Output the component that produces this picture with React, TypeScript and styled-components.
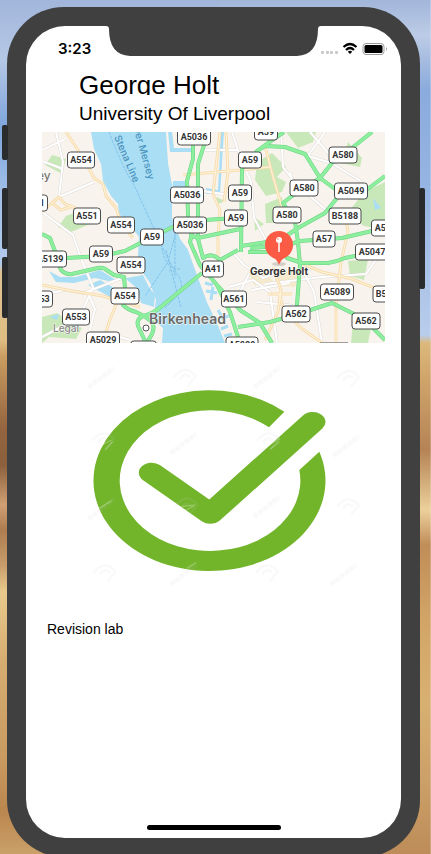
import React from "react";
import styled, { createGlobalStyle } from "styled-components";

const GlobalStyle = createGlobalStyle`
  *, *::before, *::after { box-sizing: border-box; }
  body { margin: 0; font-family: "Liberation Sans", Arial, sans-serif; color: #000; }
  h1, h2, p { margin: 0; font-weight: 400; }
  svg { display: block; }
`;

const Desktop = styled.div`
  display: flex;
  min-height: 100vh;
  overflow: hidden;
  background:
    linear-gradient(180deg, #a2b6db 0, #b5c8e6 60px, #8fb0df 105px, #7da6dc 130px, #a0bfe8 190px, #b2caed 264px,
      #dfc394 272px, #dfbd82 340px, #c99c60 357px, #93643f 430px, #8c603d 465px, #d0a074 505px, #ad7d50 530px,
      #c79c6a 565px, #e8ca8c 592px, #d6ad70 660px, #c89a60 760px, #bb864f 810px, #caa069 854px) 0 0 / 51% 100% no-repeat,
    linear-gradient(180deg, #a2b6db 0, #bccce6 35px, #a6bce0 60px, #8aabdd 90px, #98b6e3 200px, #b9cdec 335px,
      #dcb87c 343px, #cfa46a 380px, #b58356 450px, #ecd09c 510px, #c08d58 545px, #d2a567 620px, #d8b071 700px,
      #cca069 780px, #bd8c58 854px) 100% 0 / 51% 100% no-repeat;
`;

const Phone = styled.div`
  position: relative;
  flex: 1;
  display: flex;
  margin: 7px 11px -3px 7px;
  padding: 19px;
  border-radius: 57px;
  background: #404040;
`;

const SideButton = styled.span<{ $side: "left" | "right"; $top: number; $length: number }>`
  position: absolute;
  ${(p) => p.$side}: -5px;
  top: ${(p) => p.$top}px;
  width: 6px;
  height: ${(p) => p.$length}px;
  border-radius: 2px;
  background: #292b2d;
`;

const Screen = styled.main`
  flex: 1;
  min-width: 0;
  display: flex;
  flex-direction: column;
  overflow: hidden;
  border-radius: 39px;
  background: #fff;
`;

const StatusBar = styled.header`
  display: grid;
  grid-template-columns: 1fr 215px 1fr;
  height: 44px;
`;

const Clock = styled.time`
  padding: 14px 0 0 32px;
  font-family: Inter, sans-serif;
  font-size: 15px;
  line-height: 18px;
  font-weight: 600;
`;

const StatusIcons = styled.div`
  display: flex;
  justify-content: flex-end;
  padding: 16px 13px 0 0;
`;

const Heading = styled.div`
  padding: 0 16px 0 53px;
`;

const Name = styled.h1`
  height: 25px;
  overflow: hidden;
  font-size: 26px;
  line-height: 30px;
`;

const Place = styled.h2`
  padding: 6px 0;
  font-size: 19px;
  line-height: 25px;
`;

const Content = styled.section`
  padding: 0 16px;
`;

const Drawing = styled.svg`
  width: 100%;
  height: auto;
`;

const Caption = styled.p`
  padding: 26px 5px;
  font-size: 14px;
  line-height: 18px;
`;

const HomeIndicator = styled.div`
  width: 134px;
  height: 5px;
  margin: auto auto 8px;
  border-radius: 3px;
  background: #000;
`;

const RoadText = styled.text`
  font: bold 9px Roboto, sans-serif;
  fill: #343434;
  text-anchor: middle;
`;

const MapText = styled.text<{ $size: number; $color: string; $weight?: number }>`
  font-family: Inter, sans-serif;
  font-size: ${(p) => p.$size}px;
  font-weight: ${(p) => p.$weight ?? 500};
  fill: ${(p) => p.$color};
  stroke: ${(p) => (p.$color === "#4a93bd" ? "none" : "#fffdf8")};
  stroke-width: 1px;
  stroke-linejoin: round;
  paint-order: stroke;
`;

const mainRoads = [
  "M0 102L8 106 14 122Q17 126 24 126L60 124 83 119 108 106 133 94 163 88 194 86",
  "M12 118L14 126 19 138Q24 143 30 142L56 136Q62 135 66 139L72 143 82 145 83 156 81 173Q86 178 94 180L102 184Q112 181 120 174L160 141",
  "M102 184Q94 186 96 194L104 211M102 184L110 190Q115 198 104 211",
  "M151 0V27L145 49 146 84 150 101 148 110 158 133 175 153 188 180 198 211",
  "M163 10L156 32V107L161 126Q170 120 178 128L196 118",
  "M146 92L150 104 156 106 198 97",
  "M242 0L226 11 215 19 200 37 199 120M215 19L223 14 243 15 263 22 278 46 293 57 323 59 343 44",
  "M330 0L310 16 290 31 278 46 250 64 241 71 253 90 256 110 258 133 255 173V183",
  "M309 56L295 66 283 81 256 96 238 108 199 114",
  "M206 120H225L258 109 300 106 330 99 343 97",
  "M208 116L236 114 245 126 260 131H286Q294 130 303 126L343 118",
  "M175 153L198 178 218 191 230 211M196 195L228 190 253 183 290 171 310 181 324 189 338 203 343 208",
];

const lanes = [
  "M24 0L36 18 44 31 52 46 61 52 64 64 74 76 80 93 91 106",
  "M0 80L10 71 17 65 23 72 31 75 57 91M10 71L19 78 31 74",
  "M178 0L171 62 178 78 176 105 176 135M141 43L198 38 228 35",
  "M223 14L230 41 239 72 244 86M184 0L186 40 182 70",
  "M0 153L30 159 61 164 98 175M76 168L67 190 61 211",
  "M302 75L306 100 299 130 294 174 294 211",
  "M245 125L280 140 310 147 343 160M237 161L242 178 259 196 280 211",
  "M231 135L239 158 236 180 223 208M226 162H250",
];

const streets = [
  "M0 18L23 7M17 65L52 50M0 80L31 103 40 129 51 155 38 185M0 29L21 37M17 65L21 30 14 0",
  "M190 0L199 27 209 50 212 86 225 110M163 18H196M160 59L188 63",
  "M239 0L241 35 255 53 284 78M268 0L287 22M283 0L266 24 289 31 319 49",
  "M190 120L202 133 221 146 237 140M187 155L211 148 228 160 235 211M207 142L198 160",
  "M258 133L272 160 280 211M223 152L280 145 324 142 336 125M248 40L252 60M210 158L248 151M215 170L255 174",
  "M0 163L23 158 42 161 80 146M32 188L0 205M61 200L88 208M46 161L53 177 48 198",
];

const parks = [
  "M3 33L10 23 24 27 20 42Z",
  "M16 95L24 84 32 81 48 92 29 100Z",
  "M215 30L230 21 244 35 235 45 244 50 240 60 224 64 213 48Z",
  "M244 0H274L271 10 256 16Z",
  "M306 10L320 26 318 35 299 31Z",
  "M322 60L343 50V98L322 94 304 83Z",
  "M223 72L240 65 243 91 224 91Z",
  "M306 129L326 127 322 148 308 144Z",
  "M311 188L329 196 326 211H309Z",
  "M0 185L15 181 28 190 40 196 34 207 7 205 0 211Z",
  "M174 65L183 69 174 73ZM212 85L222 92 213 99Z",
];

const shields: [string, number, number, number][] = [
  ["A5036", 152, 5, 33], ["A59", 224, 0, 23], ["A59", 208, 28, 23], ["A554", 39, 28, 27],
  ["A580", 301, 23, 28], ["A5036", 145, 63, 33], ["A59", 198, 61, 23], ["A580", 262, 56, 28],
  ["A5049", 309, 59, 33], ["A551", -8, 71, 27], ["A551", 45, 84, 27], ["A554", 79, 93, 27],
  ["A5036", 148, 93, 33], ["A59", 194, 86, 23], ["A580", 245, 83, 28], ["B5188", 303, 84, 32],
  ["A5047", 346, 96, 33], ["A59", 110, 105, 23], ["A57", 282, 107, 22], ["A5139", 8, 127, 33],
  ["A59", 59, 122, 23], ["A554", 89, 133, 28], ["A41", 171, 137, 21], ["A5047", 330, 120, 33],
  ["A554", 83, 164, 28], ["A553", -3, 167, 27], ["A561", 192, 167, 25], ["A5089", 295, 160, 33],
  ["B5179", 347, 162, 32], ["A553", 34, 185, 27], ["A562", 254, 182, 28], ["A562", 324, 189, 28],
  ["A5029", 61, 208, 33], ["A5089", 200, 213, 32],
];

function StreetMap() {
  return (
    <Drawing viewBox="0 0 343 211" role="img" aria-label="Map of Liverpool">
      <rect width="343" height="211" fill="#f8f4ed" />
      {parks.map((d) => <path key={d} d={d} fill="#c9e8ba" />)}
      <path d="M207 142L224 139 232 151 212 153ZM235 138L258 140 253 155 232 154Z" fill="#f5eacb" />
      <g fill="#a9def5">
        <path d="M49 0L52 17 59 32 61 49 69 64 76 72 77 82 89 94 97 105 96 124 101 141 108 151 114 168 113 176 107 184 121 196 120 211H183L175 190 165 170 158 146 150 123 138 107 134 95 130 86V53L126 31 124 0Z" />
        <path d="M126 0H130L132 16H150V20H128ZM131 49H146L143 60H130ZM164 56L176 58 179 0H182L178 62H164Z" />
        <path d="M7 139L18 145H34L58 138 74 148 101 143 107 155 113 163 112 175 99 171 96 157 84 147 66 149 53 146 32 151 14 150ZM46 153L58 148 76 158 70 166Z" />
        <path d="M331 66L339 76 333 78ZM30 193L37 194 35 198ZM8 185L17 182 15 188Z" />
      </g>
      <path d="M150 111L163 142 174 163 187 170 199 211H184L165 170 156 146 146 118Z" fill="#f8f4ed" />
      <path d="M163 151L171 153M164 159L175 161M171 155L169 168M176 178L183 190M178 186L187 184M179 197L186 194M182 204L190 202" stroke="#a9def5" strokeWidth="3" fill="none" />
      <path d="M67 0Q82 39 92 53L125 125 133 139M133 93V146M134 100L126 130 103 164M119 108Q121 139 139 137M124 118L139 176M127 138Q142 142 139 160L123 176" stroke="#83c3ea" strokeWidth="1" strokeDasharray="3 1" fill="none" />
      <g fill="none" strokeLinejoin="round">
        {streets.map((d) => <path key={d} d={d} stroke="#dedad7" strokeWidth="3" />)}
        {streets.map((d) => <path key={d} d={d} stroke="#fff" strokeWidth="2" />)}
        {lanes.map((d) => <path key={d} d={d} stroke="#f7dcae" strokeWidth="3" />)}
        {lanes.map((d) => <path key={d} d={d} stroke="#fff6df" strokeWidth="1" />)}
        {mainRoads.map((d) => <path key={d} d={d} stroke="#6bd083" strokeWidth="4" />)}
        {mainRoads.map((d) => <path key={d} d={d} stroke="#8bef9e" strokeWidth="3" />)}
      </g>
      <MapText $size={10} $color="#4a93bd" transform="translate(72 5) rotate(67)">Stena Line</MapText>
      <MapText $size={10} $color="#4a93bd" transform="translate(89 -12) rotate(74)">River Mersey</MapText>
      <MapText $size={12} $color="#777" x="-5" y="48">ey</MapText>
      <MapText $size={10} $color="#888" x="11" y="200">Legal</MapText>
      {shields.map(([name, x, y, w], i) => (
        <g key={i}>
          <rect x={x - w / 2} y={y - 8} width={w} height="16" rx="3" fill="#fff" stroke="#4b4b4b" />
          <RoadText x={x} y={y + 3}>{name}</RoadText>
        </g>
      ))}
      <path d="M89 211Q89 209 92 209H111Q114 209 114 211" fill="#fff" stroke="#4b4b4b" />
      <path d="M278 211H306" stroke="#4b4b4b" />
      <circle cx="104" cy="196" r="3" fill="#fff" stroke="#555" />
      <MapText $size={14} $weight={600} $color="#696969" x="107" y="192">Birkenhead</MapText>
      <ellipse cx="237" cy="132" rx="7" ry="2" fill="#000" opacity=".15" />
      <circle cx="237" cy="113" r="14" fill="#fb5b45" />
      <path d="M230 125Q235 127 237 133 239 127 244 125Z" fill="#fb5b45" />
      <path d="M237 111V120" stroke="#ffd6d0" strokeWidth="2" />
      <circle cx="237" cy="108" r="3" fill="#fff" />
      <circle cx="236" cy="107" r="1" fill="#ffb6aa" />
      <MapText $size={10} $weight={700} $color="#333" x="237" y="143" textAnchor="middle">George Holt</MapText>
    </Drawing>
  );
}

const smudges: [number, number][] = [
  [95, 80], [592, 80], [342, 278], [830, 285], [95, 475], [592, 468], [342, 672], [822, 672],
];
const cameras: [number, number][] = [
  [345, 82], [835, 85], [100, 272], [595, 272], [350, 468], [835, 470], [105, 668], [592, 668],
];

function TickPicture() {
  return (
    <Drawing viewBox="-84 -21 1029 753" role="img" aria-label="Green tick in a circle">
      <path d="M643 185A348 271 0 1 0 748 305L688 360A271 211 0 1 1 597 232Z" fill="#72b52b" />
      <path d="M245 472L421 630 728 277" transform="scale(1 .78)" fill="none" stroke="#72b52b" strokeWidth="77" strokeLinecap="round" strokeLinejoin="round" />
      <g fill="none" stroke="#cfcfcf" opacity=".1">
        {smudges.map(([x, y]) => (
          <path key={`${x}-${y}`} d={`M${x - 40} ${y + 32}L${x + 36} ${y - 26}`} strokeWidth="14" strokeDasharray="15 3" />
        ))}
        {cameras.map(([x, y]) => (
          <path key={`${x}-${y}`} d={`M${x - 34} ${y}Q${x} ${y - 42} ${x + 32} ${y - 4}L${x + 8} ${y + 26}M${x - 16} ${y + 6}Q${x} ${y - 18} ${x + 14} ${y}`} strokeWidth="7" />
        ))}
      </g>
      <g stroke="#fff" strokeWidth="4" opacity=".25">
        <path d="M85 290L125 270M105 300L128 275M590 290L630 265M600 298L628 275M335 470L375 465M345 482L372 468M88 475L125 452M350 655L378 638" />
      </g>
    </Drawing>
  );
}

export default function App() {
  return (
    <>
      <GlobalStyle />
      <Desktop>
        <Phone>
          <SideButton $side="left" $top={118} $length={35} />
          <SideButton $side="left" $top={181} $length={61} />
          <SideButton $side="left" $top={250} $length={61} />
          <SideButton $side="right" $top={181} $length={101} />
          <Screen>
            <StatusBar>
              <Clock>3:23</Clock>
              <svg width="215" height="30" aria-hidden="true">
                <path d="M0 0Q3 0 3 3Q3 29 24 30H191Q212 29 212 3Q212 0 215 0Z" fill="#404040" />
              </svg>
              <StatusIcons>
                <svg width="67" height="14" viewBox="0 0 67 14" aria-label="Wi-Fi on, battery full" role="img">
                  <g fill="#c8c8c8">
                    <rect y="9" width="3" height="3" rx="1" />
                    <rect x="5" y="9" width="3" height="3" rx="1" />
                    <rect x="9" y="9" width="3" height="3" rx="1" />
                    <rect x="14" y="9" width="3" height="3" rx="1" />
                  </g>
                  <path d="M22.500 5Q29 -1 35.500 5M25 8Q29 4 33 8" fill="none" stroke="#000" strokeWidth="2.200" />
                  <path d="M26.800 9.700Q29 8 31.200 9.700L29 12Z" />
                  <rect x="42" y="1.500" width="21" height="11" rx="3" fill="none" stroke="#9c9c9c" />
                  <rect x="43.500" y="3" width="18" height="8" rx="1.500" />
                  <path d="M65 5V9Q67 7 65 5" fill="#9c9c9c" />
                </svg>
              </StatusIcons>
            </StatusBar>
            <Heading>
              <Name>George Holt</Name>
              <Place>University Of Liverpool</Place>
            </Heading>
            <Content>
              <StreetMap />
              <TickPicture />
              <Caption>Revision lab</Caption>
            </Content>
            <HomeIndicator />
          </Screen>
        </Phone>
      </Desktop>
    </>
  );
}
